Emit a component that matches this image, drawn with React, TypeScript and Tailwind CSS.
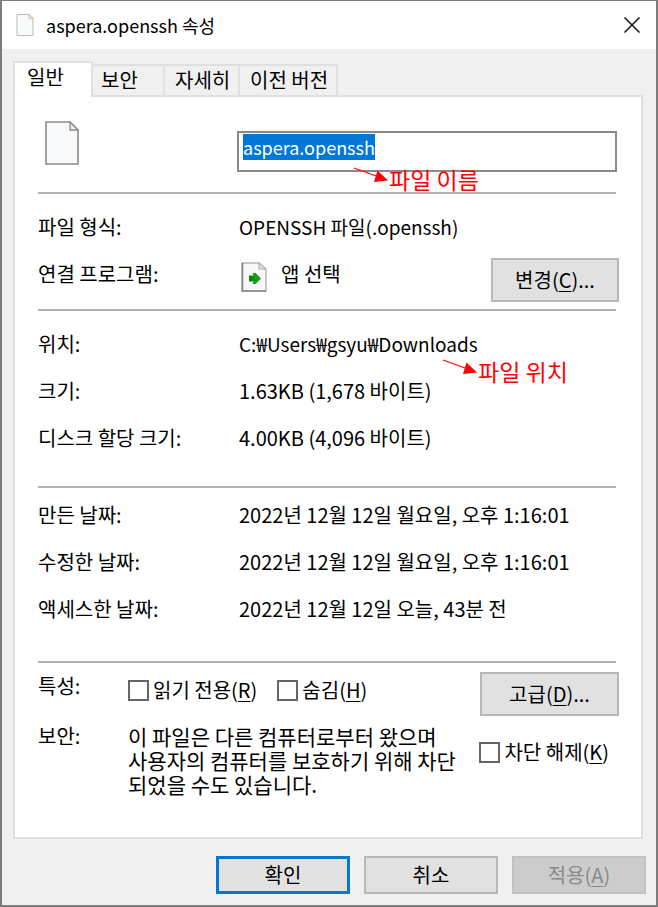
import { useEffect, useRef, type ReactNode } from "react";

function FileIcon({ className, stroke }: { className: string; stroke: string }) {
  return (
    <svg viewBox="0 0 34 44" className={className} fill="none" aria-hidden="true">
      <path d="M1 1H25L33 9V43H1Z" fill="#f7f9fa" stroke={stroke} strokeWidth="1.6" />
      <path d="M25 1V9H33Z" fill="#ececec" stroke={stroke} strokeWidth="1.3" />
    </svg>
  );
}

function AppIcon() {
  return (
    <svg viewBox="0 0 26 30" className="h-[30px] w-[26px] shrink-0" fill="none" aria-hidden="true">
      <path d="M1 1H18L25 8V29H1Z" fill="#f8f8f8" stroke="#b4b4b4" strokeWidth="1.4" />
      <path d="M1.5 1V29H25" stroke="#858585" strokeWidth="1.6" />
      <path d="M18 1V7H25Z" fill="#e4e4e4" stroke="#b0b0b0" strokeWidth="1.2" />
      <path d="M8 13.500H12.500L11.500 11H14.500L20 16.500L14.500 22H11.500L12.500 19.500H8Z" fill="#12a012" />
      <path d="M8 14H12.500V19H8Z" fill="#0b840b" />
    </svg>
  );
}

function Arrow() {
  return (
    <svg viewBox="0 0 36 16" className="h-4 w-9 shrink-0" aria-hidden="true">
      <path d="M1 1L26 10" stroke="#f00" strokeWidth="1.1" />
      <path d="M24.500 3.500L35 13.500L21 15Z" fill="#f00" />
    </svg>
  );
}

function Note({ children, className }: { children: ReactNode; className: string }) {
  return (
    <div className={`pointer-events-none absolute flex text-[23px] leading-6 whitespace-nowrap text-[#ff0000] ${className}`}>
      <Arrow />
      <span>{children}</span>
    </div>
  );
}

function Key({ children }: { children: string }) {
  return (
    <>
      (<u className="underline decoration-1 underline-offset-3">{children}</u>)
    </>
  );
}

function Rule() {
  return <hr className="mr-[3px] border-0 border-t-2 border-[#b2b2b2]" />;
}

function Row({ label, children }: { label: string; children: ReactNode }) {
  return (
    <div className="flex h-[47px] leading-[44px]">
      <dt className="w-[201px] shrink-0">{label}:</dt>
      <dd className="flex grow whitespace-nowrap">{children}</dd>
    </div>
  );
}

function Check({ children, className = "" }: { children: ReactNode; className?: string }) {
  return (
    <label className={`flex items-center gap-1 leading-6 whitespace-nowrap ${className}`}>
      <input
        type="checkbox"
        className="size-[21px] shrink-0 appearance-none border-2 border-[#666] bg-white checked:bg-[#0078d7]"
      />
      <span>{children}</span>
    </label>
  );
}

const securityText = `이 파일은 다른 컴퓨터로부터 왔으며
사용자의 컴퓨터를 보호하기 위해 차단
되었을 수도 있습니다.`;

const pushButton = "border-2 border-[#b8b8b8] bg-[#e1e1e1] leading-6";
const sideTab = "h-[33px] border-t-2 border-r-2 border-[#e0e0e0] pb-1 text-left leading-6";

export default function App() {
  const nameRef = useRef<HTMLInputElement>(null);

  useEffect(() => {
    nameRef.current?.focus();
    nameRef.current?.select();
  }, []);

  return (
    <main className="flex min-h-screen flex-col border-2 border-t-1 border-[#7c7c7c] bg-[#f0f0f0] font-['Noto_Sans_CJK_KR',sans-serif] text-[20px] text-black">
      <header className="flex h-12 items-center bg-white pr-3.5 pl-3.5">
        <FileIcon className="h-[22px] w-[18px]" stroke="#aaaaaa" />
        <h1 className="ml-3 grow text-[18px] leading-6">aspera.openssh 속성</h1>
        <button type="button" aria-label="닫기" className="p-0.5">
          <svg viewBox="0 0 16 16" className="size-4" aria-hidden="true">
            <path d="M0.500 0.500L15.500 15.500M15.500 0.500L0.500 15.500" stroke="#111" strokeWidth="1.5" />
          </svg>
        </button>
      </header>

      <div className="flex grow flex-col px-[11px] pt-3 pb-[11px]">
        <div role="tablist" className="z-10 -mb-0.5 flex items-end">
          <button
            role="tab"
            aria-selected="true"
            type="button"
            className="h-9 w-20 border-2 border-b-0 border-[#e0e0e0] bg-white pb-1.5 pl-3 text-left leading-6"
          >
            일반
          </button>
          <button role="tab" type="button" className={`${sideTab} w-[72px] pl-2`}>보안</button>
          <button role="tab" type="button" className={`${sideTab} w-[75px] pl-2.5`}>자세히</button>
          <button role="tab" type="button" className={`${sideTab} w-[98px] pl-2.5 whitespace-nowrap`}>이전 버전</button>
        </div>

        <section className="mr-0.5 flex grow flex-col border-2 border-[#e0e0e0] bg-white pr-[22px] pl-[23px]">
          <div className="relative flex h-[95px] pt-6 pl-[7px]">
            <FileIcon className="h-11 w-[34px]" stroke="#8a8a8a" />
            <input
              ref={nameRef}
              type="text"
              aria-label="파일 이름"
              defaultValue="aspera.openssh"
              className="mt-2.5 mr-0.5 ml-[158px] h-[41px] min-w-0 grow border-2 border-[#8a8a8a] px-1 pt-0.5 pb-[11px] text-[18px] leading-6 outline-none selection:bg-[#0078d7] selection:text-white"
            />
            <Note className="top-[70px] left-[315px]">파일 이름</Note>
          </div>
          <Rule />
          <dl className="pt-[11px]">
            <Row label="파일 형식"><span className="text-[19px]">OPENSSH 파일(.openssh)</span></Row>
            <div className="h-[57px]">
              <Row label="연결 프로그램">
                <span className="flex grow items-start">
                  <span className="mt-2.5 mr-3.5 ml-0.5">
                    <AppIcon />
                  </span>
                  앱 선택
                </span>
                <button type="button" className={`${pushButton} mt-1.5 h-11 w-32`}>
                  변경<Key>C</Key>...
                </button>
              </Row>
            </div>
          </dl>
          <Rule />
          <dl className="relative pt-[11px] pb-[23px]">
            <Row label="위치"><span className="text-[19px]">C:₩Users₩gsyu₩Downloads</span></Row>
            <Row label="크기">1.63KB (1,678 바이트)</Row>
            <Row label="디스크 할당 크기">4.00KB (4,096 바이트)</Row>
            <Note className="top-12 left-[404px]">파일 위치</Note>
          </dl>
          <Rule />
          <dl className="pt-[5px] pb-[27px]">
            <Row label="만든 날짜">2022년 12월 12일 월요일, 오후 1:16:01</Row>
            <Row label="수정한 날짜">2022년 12월 12일 월요일, 오후 1:16:01</Row>
            <Row label="액세스한 날짜">2022년 12월 12일 오늘, 43분 전</Row>
          </dl>
          <Rule />
          <div className="flex pt-[9px]">
            <span className="mt-0.5 w-[90px] shrink-0 leading-6">특성:</span>
            <div className="flex h-11 grow items-start gap-5 pt-1.5">
              <Check>읽기 전용<Key>R</Key></Check>
              <Check>숨김<Key>H</Key></Check>
            </div>
            <button type="button" className={`${pushButton} h-11 w-[139px]`}>
              고급<Key>D</Key>...
            </button>
          </div>
          <div className="flex pt-2 pb-10 leading-6">
            <span className="w-[90px] shrink-0">보안:</span>
            <p className="shrink-0 text-[21px] whitespace-pre">{securityText}</p>
            <Check className="mt-4 mr-2.5 ml-auto self-start">차단 해제<Key>K</Key></Check>
          </div>
        </section>

        <footer className="flex justify-end gap-3.5 pt-[17px]">
          <button type="button" className="h-[38px] w-[134px] border-3 border-[#0078d7] bg-[#e1e1e1] leading-6">확인</button>
          <button type="button" className={`${pushButton} h-[38px] w-[134px]`}>취소</button>
          <button type="button" disabled className="-mr-px h-[38px] w-[134px] border-2 border-[#c2c2c2] bg-[#cccccc] leading-6 text-[#8a8a8a]">
            적용<Key>A</Key>
          </button>
        </footer>
      </div>
    </main>
  );
}
